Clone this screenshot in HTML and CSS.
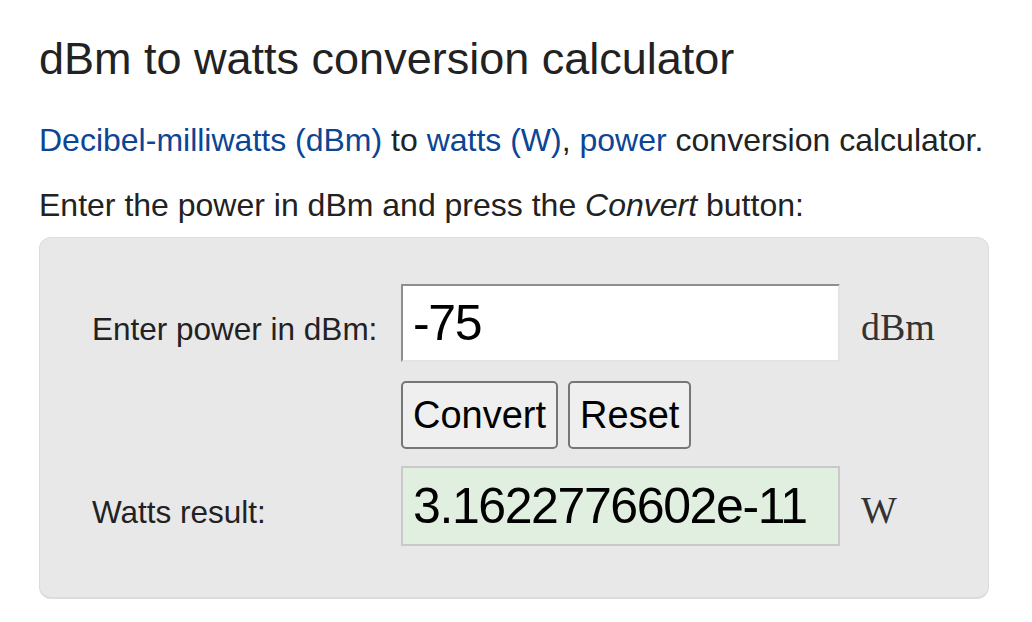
FILE: index.html
```html
<!DOCTYPE html>
<html lang="en">

<head>
  <meta charset="UTF-8" />
  <meta name="viewport" content="width=device-width, initial-scale=1.0" />
  <title>dBm to watts conversion calculator</title>

  <link rel="stylesheet" href="styles.css">
</head>

<body>
  <h1>dBm to watts conversion calculator</h1>

  <p><a href="#">Decibel-milliwatts (dBm)</a> to <a href="#">watts (W)</a>, <a href="#">power</a> conversion calculator.</p>
  <p class="hint">Enter the power in dBm and press the <i>Convert</i> button:</p>

  <form class="calc">
    <label class="label" for="dbm">Enter power in dBm:</label>
    <input class="field" id="dbm" type="text" value="-75">
    <span class="unit">dBm</span>

    <div class="buttons">
      <button type="button">Convert</button>
      <button type="reset">Reset</button>
    </div>

    <label class="label" for="watts">Watts result:</label>
    <input class="field result" id="watts" type="text" value="3.1622776602e-11" readonly>
    <span class="unit">W</span>
  </form>
</body>

</html>
```

FILE: styles.css
```css
body {
  margin: 0;
  padding: 0 44px 0 39px;
  font-family: "Liberation Sans", Arial, sans-serif;
  font-size: 32px;
  color: #222;
  background-color: #fff;
}

h1 {
  font-size: 45px;
  font-weight: normal;
  line-height: 52px;
  margin: 33px 0 0;
  color: #222;
}

p {
  line-height: 40px;
  margin: 35px 0 0;
}

p.hint {
  margin-top: 25px;
}

a {
  color: #0b4595;
  text-decoration: none;
}

.calc {
  margin-top: 12px;
  width: 950px;
  box-sizing: border-box;
  padding: 46px 0 51px 52px;
  background-color: #e8e8e8;
  border: 1px solid #dcdcdc;
  border-bottom-width: 2px;
  border-radius: 12px;
  display: grid;
  grid-template-columns: 309px 439px auto;
  row-gap: 19px;
  align-items: baseline;
}

.label {
  font-size: 31.5px;
  color: #222;
}

.field {
  box-sizing: border-box;
  width: 439px;
  height: 78px;
  margin: 0;
  padding: 0 10px;
  font-family: "Liberation Sans", Arial, sans-serif;
  font-size: 50px;
  letter-spacing: -1.4px;
  color: #000;
  background-color: #fff;
  border: 2px solid;
  border-color: #8e8e8e #e4e4e4 #e4e4e4 #8e8e8e;
  outline: none;
}

.field.result {
  height: 80px;
  background-color: #e1efe1;
  border-color: #c9c9c9;
}

.unit {
  padding-left: 21px;
  font-family: "Liberation Serif", "Times New Roman", serif;
  font-size: 38px;
  color: #333;
}

.buttons {
  grid-column: 2 / 4;
  display: flex;
  gap: 10px;
  margin: 0 0 -2px;
}

.buttons button {
  height: 68px;
  padding: 0 10px;
  font-family: "Liberation Sans", Arial, sans-serif;
  font-size: 38px;
  color: #000;
  background-color: #efefef;
  border: 2px solid #767676;
  border-radius: 5px;
}
```
